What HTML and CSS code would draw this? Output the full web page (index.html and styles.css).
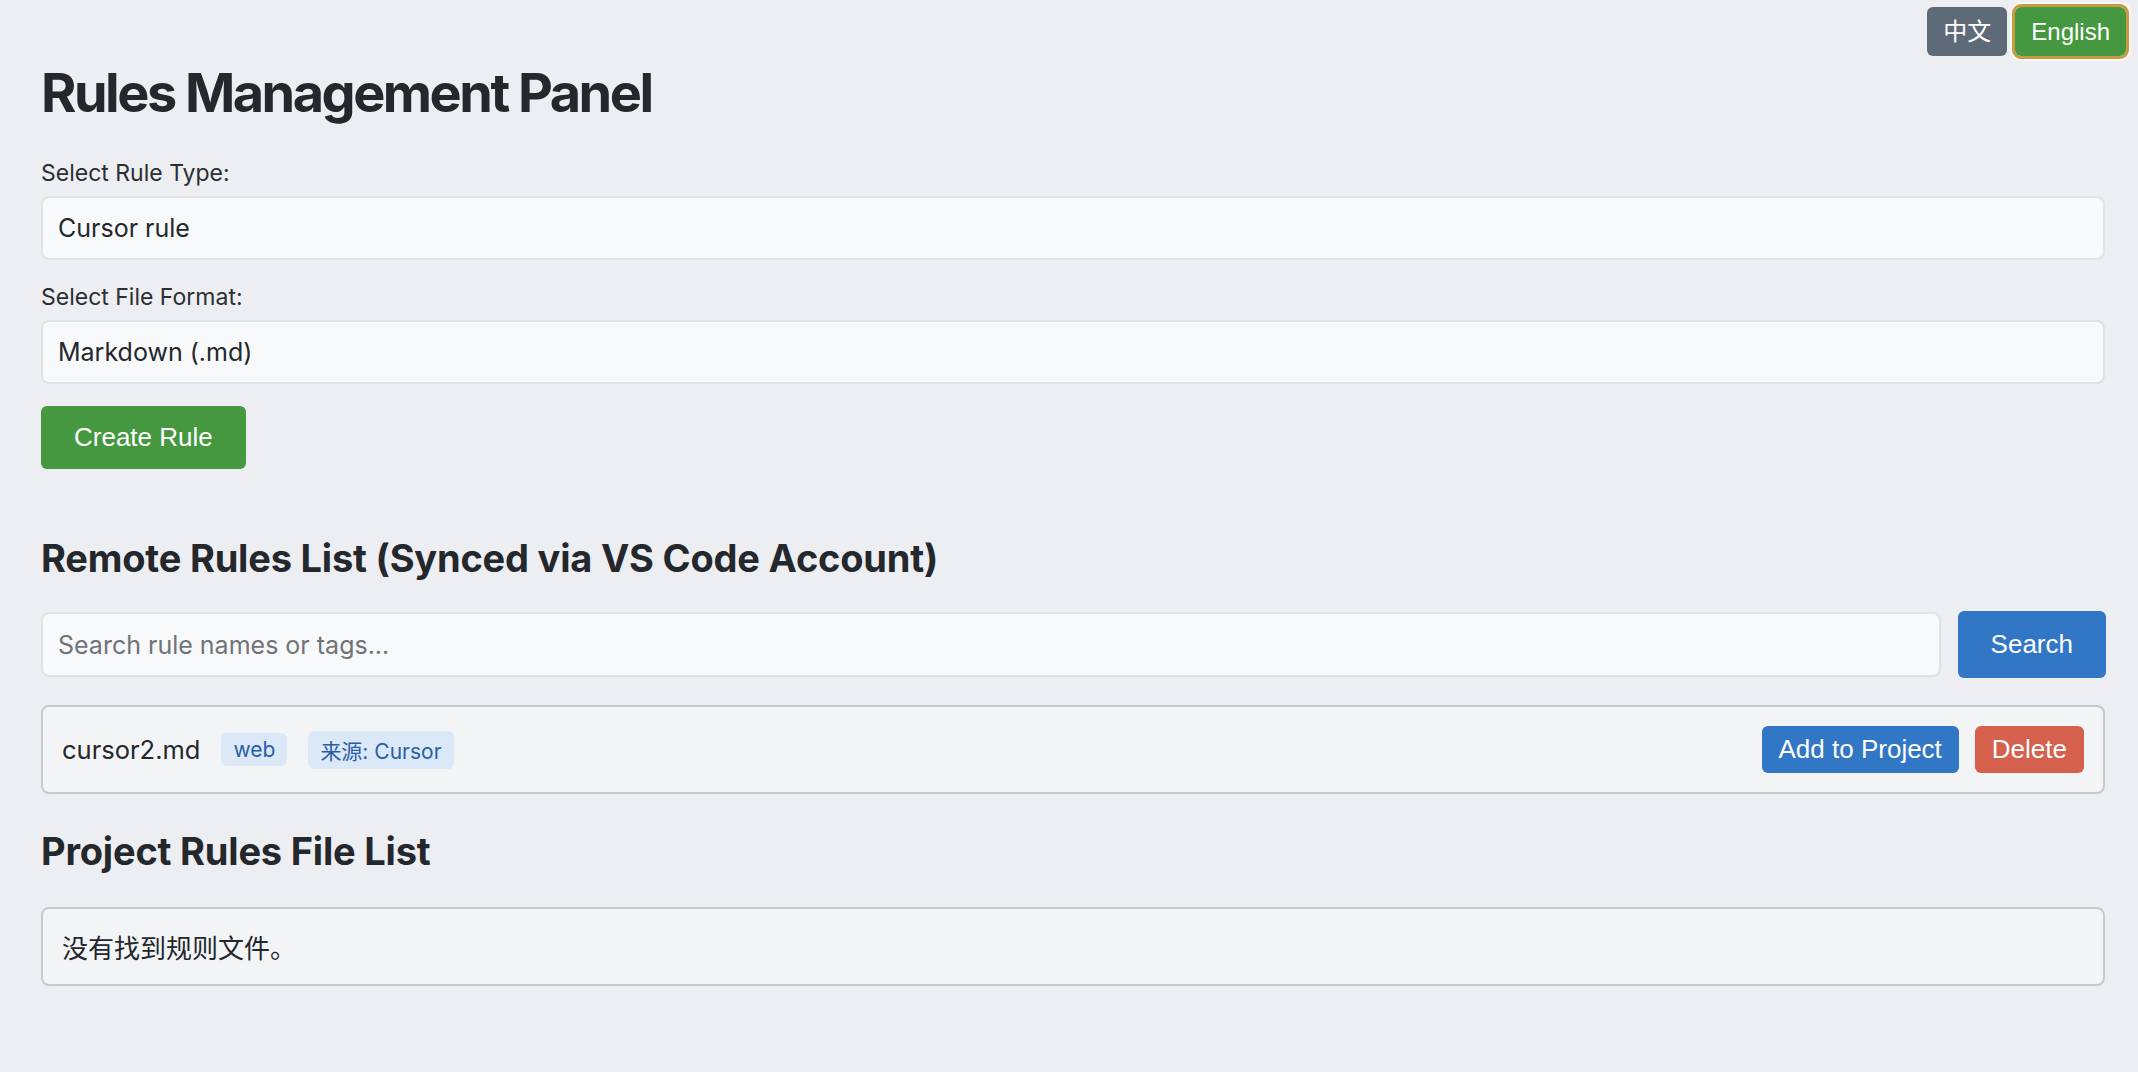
FILE: index.html
```html
<!DOCTYPE html>
<html lang="en">

<head>
    <meta charset="UTF-8">
    <meta name="viewport" content="width=device-width, initial-scale=1.0">
    <title>Rules Management Panel</title>
    <link rel="stylesheet" href="styles.css">
</head>

<body>
    <div class="lang-bar">
        <button class="lang-btn lang-zh">中文</button>
        <button class="lang-btn lang-en">English</button>
    </div>

    <h1>Rules Management Panel</h1>

    <div class="field">
        <label for="rule-type">Select Rule Type:</label>
        <div class="select" id="rule-type">Cursor rule</div>
    </div>

    <div class="field">
        <label for="file-format">Select File Format:</label>
        <div class="select" id="file-format">Markdown (.md)</div>
    </div>

    <button class="btn btn-green btn-create">Create Rule</button>

    <h2 class="remote-title">Remote Rules List (Synced via VS Code Account)</h2>

    <div class="search-row">
        <input type="text" class="search-input" placeholder="Search rule names or tags...">
        <button class="btn btn-blue btn-search">Search</button>
    </div>

    <div class="rule-card">
        <span class="rule-name">cursor2.md</span>
        <span class="tag">web</span>
        <span class="tag">来源: Cursor</span>
        <div class="rule-actions">
            <button class="btn btn-blue btn-small">Add to Project</button>
            <button class="btn btn-red btn-small">Delete</button>
        </div>
    </div>

    <h2 class="project-title">Project Rules File List</h2>

    <div class="empty-box">没有找到规则文件。</div>
</body>

</html>
```

FILE: styles.css
```css
body {
    font-family: Inter, "Noto Sans CJK SC", sans-serif;
    margin: 0;
    padding: 0 33px 40px 41px;
    background-color: #edeef2;
    color: #24272c;
}

.lang-bar {
    display: flex;
    justify-content: flex-end;
    gap: 8px;
    padding-top: 7px;
    margin-right: -21px;
}

.lang-btn {
    font-family: "Liberation Sans", "Noto Sans CJK SC", sans-serif;
    font-size: 24px;
    line-height: 29px;
    height: 49px;
    padding: 0 16px;
    border: none;
    border-radius: 6px;
    color: #fff;
}

.lang-zh {
    background-color: #5e6a78;
}

.lang-en {
    background-color: #45983f;
    outline: 3px solid #c99a3d;
    box-shadow: 0 0 0 5px rgba(255, 255, 255, 0.6);
}

h1 {
    font-size: 54px;
    line-height: 64px;
    font-weight: 700;
    letter-spacing: -2.5px;
    margin: 5px 0 33px;
}

h2 {
    font-size: 38px;
    line-height: 44px;
    font-weight: 700;
    letter-spacing: -0.2px;
    margin: 0;
}

.field {
    margin-bottom: 22px;
}

.field label {
    display: block;
    font-size: 23px;
    line-height: 30px;
    margin-bottom: 8px;
    color: #2b2e33;
}

.select,
.search-input {
    box-sizing: border-box;
    height: 64px;
    display: flex;
    align-items: center;
    padding: 0 15px;
    background-color: #f8f9fb;
    border: 2px solid #e1e2e6;
    border-radius: 8px;
    font-size: 25px;
    color: #24272c;
}

.btn {
    font-family: "Liberation Sans", sans-serif;
    font-size: 26px;
    color: #fff;
    border: none;
    border-radius: 6px;
    cursor: pointer;
}

.btn-green {
    background-color: #45983f;
}

.btn-blue {
    background-color: #3277c5;
}

.btn-red {
    background-color: #d4604d;
}

.btn-create {
    height: 63px;
    padding: 0 33px;
    display: block;
}

.remote-title {
    margin-top: 67px;
    margin-bottom: 31px;
}

.search-row {
    display: flex;
    align-items: center;
    gap: 17px;
}

.search-input {
    flex: 1;
    height: 65px;
    font-family: Inter, sans-serif;
    outline: none;
}

.search-input::placeholder {
    color: #707378;
}

.btn-search {
    height: 67px;
    padding: 0 33px;
    margin-right: -1px;
}

.rule-card {
    display: flex;
    align-items: center;
    gap: 21px;
    box-sizing: border-box;
    height: 89px;
    margin-top: 27px;
    padding: 0 19px;
    background-color: #f3f4f6;
    border: 2px solid #c8c9cc;
    border-radius: 8px;
}

.rule-name {
    font-size: 25.5px;
}

.tag {
    font-size: 21px;
    padding: 4px 12px;
    background-color: #dbe8f7;
    color: #2a5ea6;
    border-radius: 6px;
}

.rule-actions {
    margin-left: auto;
    display: flex;
    gap: 16px;
}

.btn-small {
    height: 47px;
    padding: 0 17px;
}

.project-title {
    margin-top: 35px;
    margin-bottom: 34px;
}

.empty-box {
    display: flex;
    align-items: center;
    box-sizing: border-box;
    height: 79px;
    padding: 0 19px;
    background-color: #f3f4f6;
    border: 2px solid #c8c9cc;
    border-radius: 8px;
    font-size: 26px;
}
```
